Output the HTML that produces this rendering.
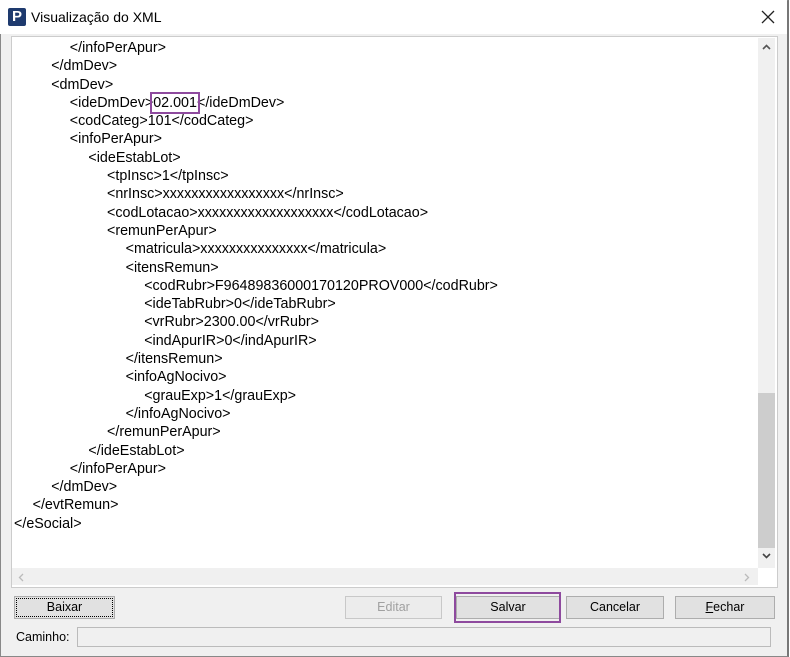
<!DOCTYPE html><html><head><style>
body{margin:0;width:790px;height:657px;background:#fff;font-family:"Liberation Sans",sans-serif;position:relative;overflow:hidden}
.abs{position:absolute}
.win{left:0;top:0;width:786px;height:655px;border:1px solid #888;border-right:2px solid #777;background:#f0f0f0}
.title{left:0;top:0;width:787px;height:34px;background:#fff}
.ta{left:11px;top:36px;width:765px;height:550px;background:#fff;border:1px solid #ccc}
.code{left:14px;top:39px;font-size:14.3px;line-height:18.3px;color:#000;white-space:pre}
.code div{height:18.3px}
.l1{margin-left:18.6px}.l2{margin-left:37.2px}.l3{margin-left:55.8px}.l4{margin-left:74.4px}.l5{margin-left:93px}.l6{margin-left:111.6px}.l7{margin-left:130.2px}
.btn{height:23px;background:#e1e1e1;border:1px solid #adadad;font-size:12.5px;text-align:center;line-height:21px;box-sizing:border-box}
</style></head><body>
<div class="abs win"></div>
<div class="abs title"></div>
<div class="abs" style="left:8px;top:8px;width:18px;height:18px;background:#1e3a6e;border-radius:2px;color:#fff;font-weight:bold;font-size:15px;line-height:18px;text-align:center">P</div>
<div class="abs" style="left:31px;top:9px;font-size:14px">Visualização do XML</div>
<svg class="abs" style="left:761px;top:10px" width="14" height="14"><path d="M1 1L13 13M13 1L1 13" stroke="#222" stroke-width="1.3"/></svg>
<div class="abs ta"></div>
<div class="abs code"><div class="l3">&lt;/infoPerApur&gt;</div><div class="l2">&lt;/dmDev&gt;</div><div class="l2">&lt;dmDev&gt;</div><div class="l3">&lt;ideDmDev&gt;<span style="outline:2px solid #8e4a9e;outline-offset:1px">02.001</span>&lt;/ideDmDev&gt;</div><div class="l3">&lt;codCateg&gt;101&lt;/codCateg&gt;</div><div class="l3">&lt;infoPerApur&gt;</div><div class="l4">&lt;ideEstabLot&gt;</div><div class="l5">&lt;tpInsc&gt;1&lt;/tpInsc&gt;</div><div class="l5">&lt;nrInsc&gt;xxxxxxxxxxxxxxxxx&lt;/nrInsc&gt;</div><div class="l5">&lt;codLotacao&gt;xxxxxxxxxxxxxxxxxxx&lt;/codLotacao&gt;</div><div class="l5">&lt;remunPerApur&gt;</div><div class="l6">&lt;matricula&gt;xxxxxxxxxxxxxxx&lt;/matricula&gt;</div><div class="l6">&lt;itensRemun&gt;</div><div class="l7">&lt;codRubr&gt;F96489836000170120PROV000&lt;/codRubr&gt;</div><div class="l7">&lt;ideTabRubr&gt;0&lt;/ideTabRubr&gt;</div><div class="l7">&lt;vrRubr&gt;2300.00&lt;/vrRubr&gt;</div><div class="l7">&lt;indApurIR&gt;0&lt;/indApurIR&gt;</div><div class="l6">&lt;/itensRemun&gt;</div><div class="l6">&lt;infoAgNocivo&gt;</div><div class="l7">&lt;grauExp&gt;1&lt;/grauExp&gt;</div><div class="l6">&lt;/infoAgNocivo&gt;</div><div class="l5">&lt;/remunPerApur&gt;</div><div class="l4">&lt;/ideEstabLot&gt;</div><div class="l3">&lt;/infoPerApur&gt;</div><div class="l2">&lt;/dmDev&gt;</div><div class="l1">&lt;/evtRemun&gt;</div><div>&lt;/eSocial&gt;</div></div>
<div class="abs" style="left:758px;top:38px;width:17px;height:530px;background:#f0f0f0"></div>
<div class="abs" style="left:758px;top:393px;width:17px;height:155px;background:#cdcdcd"></div>
<svg class="abs" style="left:762px;top:44px" width="9" height="6"><path d="M1 5L4.5 1.5L8 5" stroke="#555" stroke-width="1.6" fill="none"/></svg>
<svg class="abs" style="left:762px;top:553px" width="9" height="6"><path d="M1 1L4.5 4.5L8 1" stroke="#444" stroke-width="1.6" fill="none"/></svg>
<div class="abs" style="left:12px;top:568px;width:746px;height:17px;background:#f0f0f0"></div>
<svg class="abs" style="left:18px;top:573px" width="6" height="9"><path d="M5 1L1.5 4.5L5 8" stroke="#bbb" stroke-width="1.3" fill="none"/></svg>
<svg class="abs" style="left:744px;top:573px" width="6" height="9"><path d="M1 1L4.5 4.5L1 8" stroke="#bbb" stroke-width="1.3" fill="none"/></svg>
<div class="abs btn" style="left:14px;top:596px;width:101px;outline:1px dotted #000;outline-offset:-3px">Baixar</div>
<div class="abs btn" style="left:345px;top:596px;width:97px;color:#a0a0a0;background:#ececec;border-color:#c8c8c8">Editar</div>
<div class="abs btn" style="left:456px;top:596px;width:104px">Salvar</div>
<div class="abs" style="left:454px;top:592px;width:107px;height:31px;border:2px solid #8e4a9e;box-sizing:border-box"></div>
<div class="abs btn" style="left:566px;top:596px;width:98px">Cancelar</div>
<div class="abs btn" style="left:675px;top:596px;width:100px"><u>F</u>echar</div>
<div class="abs" style="left:16px;top:630px;font-size:12.5px">Caminho:</div>
<div class="abs" style="left:77px;top:627px;width:694px;height:20px;border:1px solid #bbb;box-sizing:border-box;background:#f0f0f0"></div>
</body></html>
